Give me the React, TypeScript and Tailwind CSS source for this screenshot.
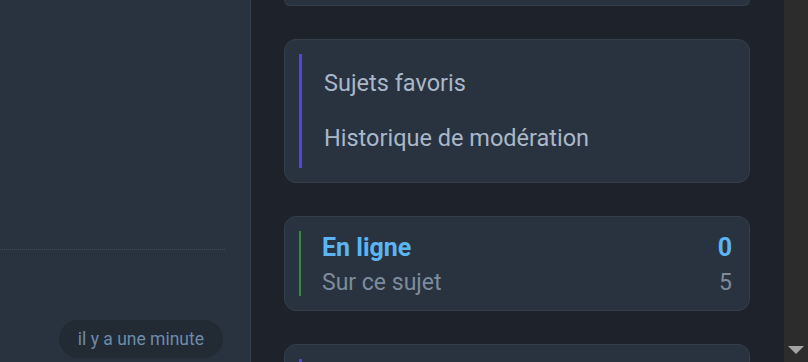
import React from "react";

export default function App() {
  return (
    <div
      className="flex h-[362px] w-[808px] overflow-hidden bg-[#1e232b]"
      style={{ fontFamily: "Roboto, 'Liberation Sans', sans-serif" }}
    >
      {/* Left panel */}
      <div className="flex h-full w-[251px] shrink-0 flex-col border-r border-[#37424e] bg-[#29333f]">
        <div className="h-[249px]" />
        <div className="mr-[25px] border-t border-dotted border-[#3f4a57]" />
        <div className="flex flex-1 items-start justify-end pr-[27px] pt-[70px]">
          <div className="flex h-[38px] items-center rounded-full bg-[#222a34] px-[19px] text-[17.5px] text-[#6d8cab]">
            il y a une minute
          </div>
        </div>
      </div>

      {/* Right column */}
      <div className="flex h-full flex-1 flex-col gap-[33px] overflow-hidden pl-[33px] pr-[34px]">
        <div className="h-[6px] shrink-0 rounded-b-xl border border-t-0 border-[#343f4b] bg-[#29333f]" />

        <div className="shrink-0 rounded-xl border border-[#343f4b] bg-[#29333f] p-[14px]">
          <div className="flex border-l-[3px] border-[#5046e0] pl-[22px]">
            <div className="flex flex-col text-[23.5px] leading-[28px] text-[#a9b8c9]">
              <div className="flex h-[56px] items-center pt-[2px]">Sujets favoris</div>
              <div className="flex h-[58px] items-center pb-[2px]">Historique de modération</div>
            </div>
          </div>
        </div>

        <div className="shrink-0 rounded-xl border border-[#343f4b] bg-[#29333f] px-[14px] py-[14px]">
          <div className="flex flex-col border-l-[2px] border-[#3a8a3f] pl-[21px] pr-[3px]">
            <div className="flex h-[33px] items-center justify-between pt-[1px] text-[25px] font-bold text-[#5bb5f5]">
              <span>En ligne</span>
              <span>0</span>
            </div>
            <div className="flex h-[32px] items-center justify-between pt-[7px] text-[23px] text-[#7d8c9c]">
              <span>Sur ce sujet</span>
              <span>5</span>
            </div>
          </div>
        </div>

        <div className="h-[60px] shrink-0 rounded-xl border border-[#343f4b] bg-[#29333f] p-[14px]">
          <div className="h-full border-l-[3px] border-[#5046e0]" />
        </div>
      </div>

      {/* Scrollbar */}
      <div className="flex h-full w-[24px] shrink-0 flex-col justify-end bg-[#2c2c2c] pb-[8px]">
        <div className="flex justify-center">
          <svg width="16" height="8" viewBox="0 0 16 8">
            <polygon points="0,0 16,0 8,8" fill="#a3a3a3" />
          </svg>
        </div>
      </div>
    </div>
  );
}
